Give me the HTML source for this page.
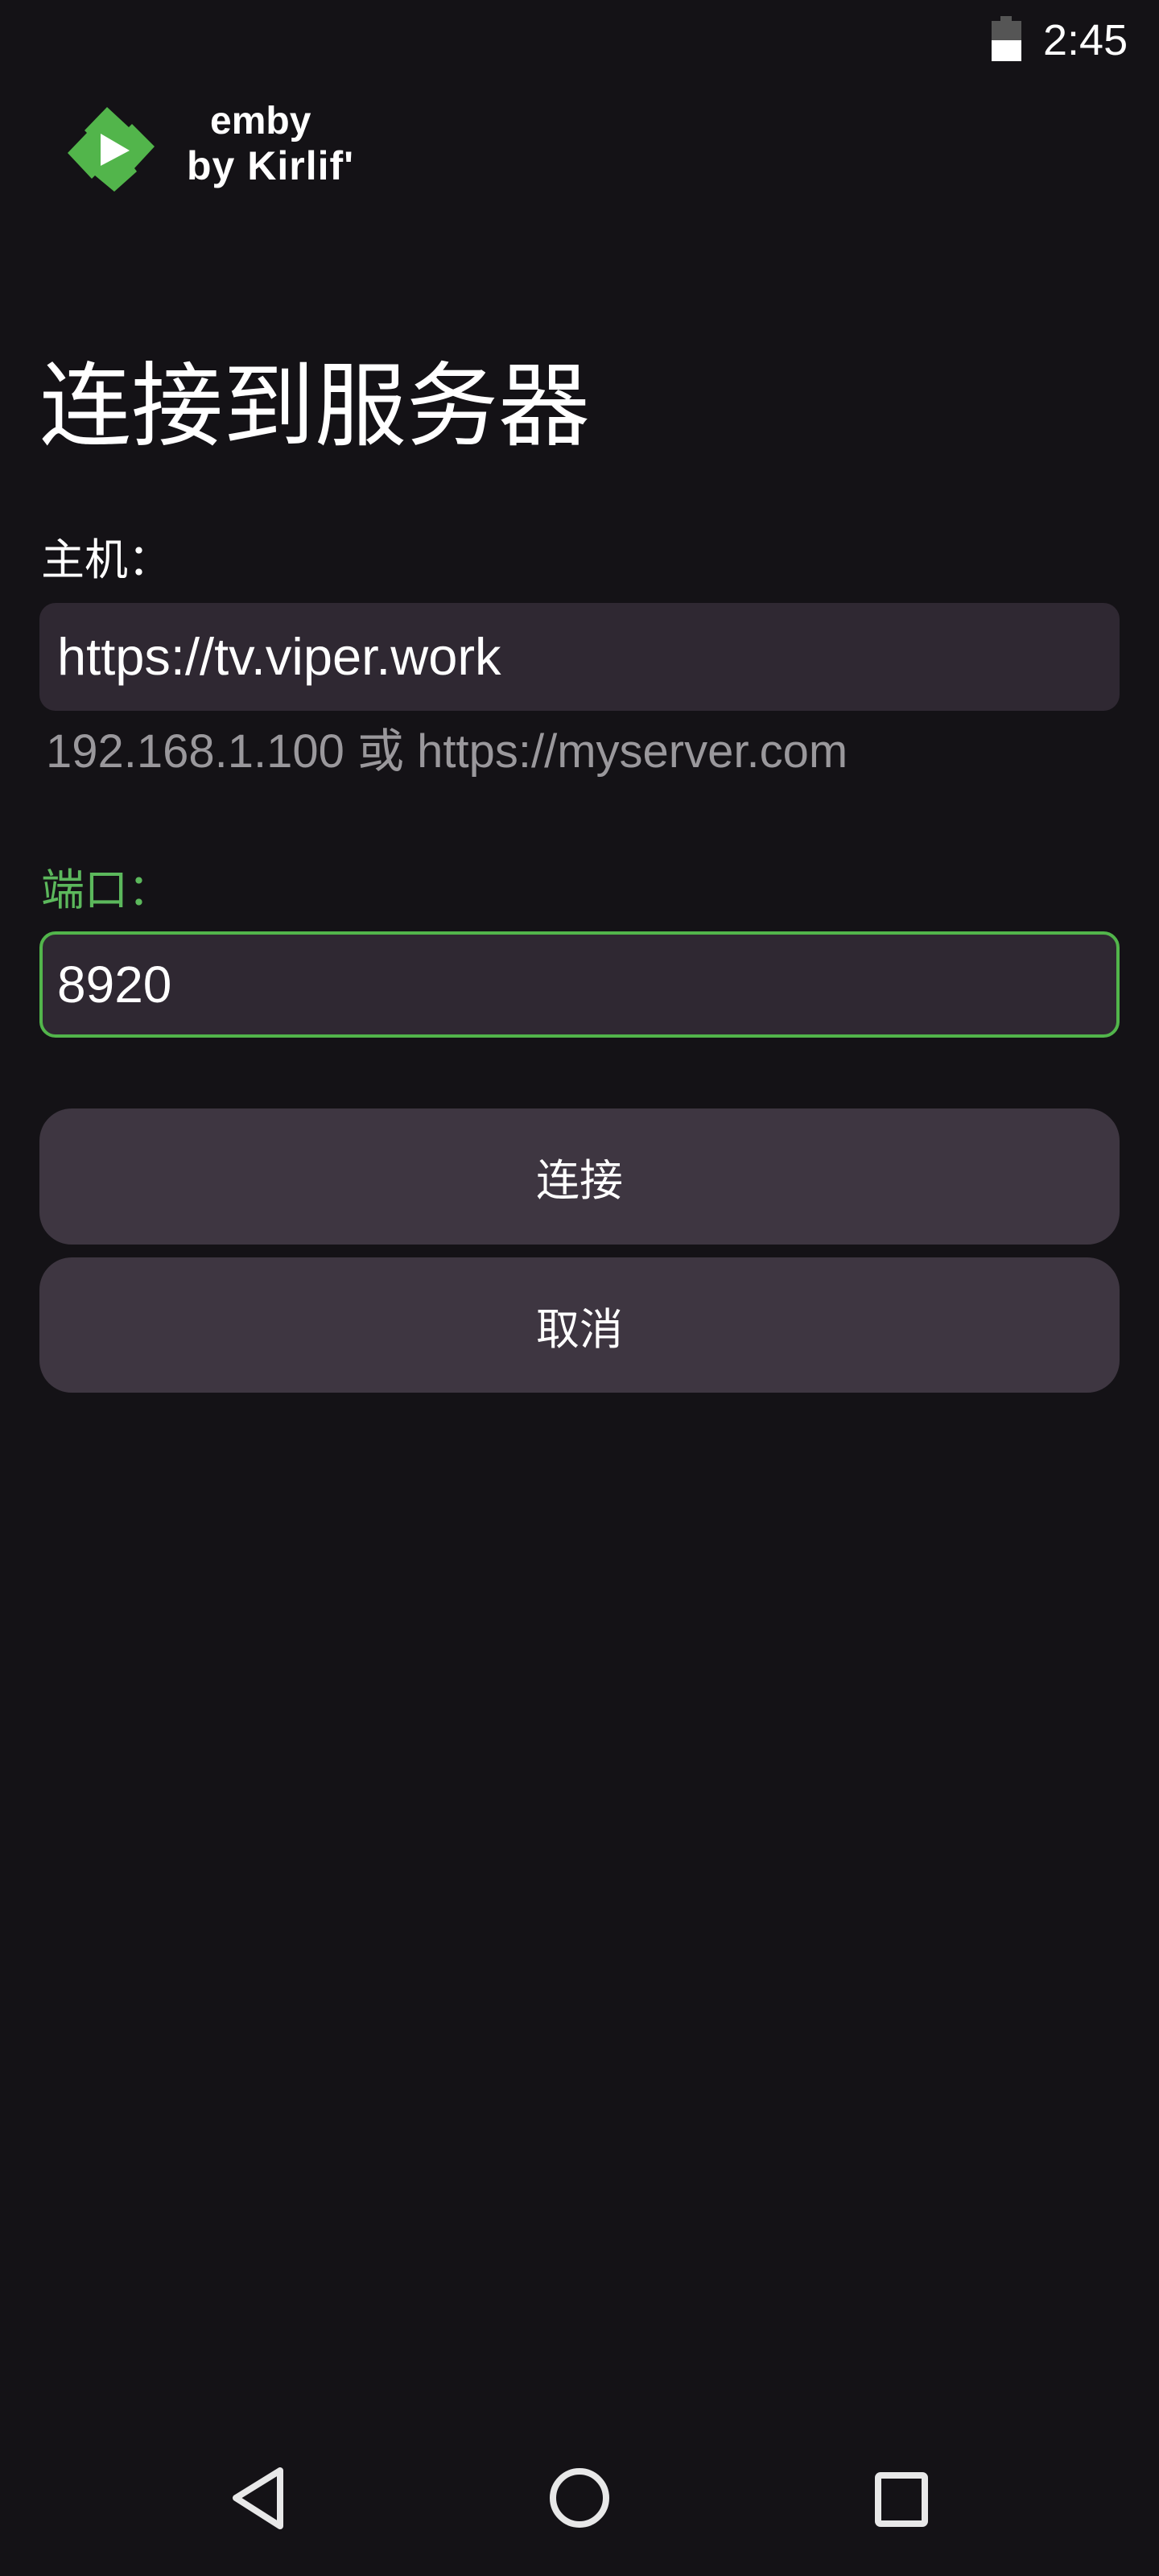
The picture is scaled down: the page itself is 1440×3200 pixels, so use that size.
<!DOCTYPE html>
<html><head><meta charset="utf-8"><style>
body{margin:0;width:1440px;height:3200px;background:#141216;position:relative;overflow:hidden;font-family:"Liberation Sans","Noto Sans CJK SC",sans-serif;color:#fff}
.a{position:absolute;white-space:nowrap}
.inp{position:absolute;left:49px;width:1342px;background:#2f2832;border-radius:20px;box-sizing:border-box}
.btn{position:absolute;left:49px;width:1342px;background:#3e3641;border-radius:40px;display:flex;align-items:center;justify-content:center;font-size:54px}
</style></head><body>
<div class="a" style="left:1243px;top:20px;width:14px;height:8px;background:#555"></div>
<div class="a" style="left:1232px;top:26px;width:37px;height:24px;background:#555"></div>
<div class="a" style="left:1232px;top:50px;width:37px;height:26px;background:#fff"></div>
<div class="a" style="left:1296px;top:18px;font-size:54px;line-height:64px">2:45</div>
<svg class="a" style="left:0;top:0" width="240" height="260"><polygon fill="#52b54b" points="133,133 160,158 164,154 192,182 167,209 170,213 142,238 118,218 114,222 84,190 108,165 105,162"/><polygon fill="#fff" points="125,166 161,187 125,206"/></svg>
<div class="a" style="left:261px;top:122px;font-size:48px;font-weight:bold;line-height:58px">emby</div>
<div class="a" style="left:232px;top:176px;font-size:50px;font-weight:bold;line-height:60px;letter-spacing:1px">by Kirlif'</div>
<div class="a" style="left:49px;top:436px;font-size:114px;line-height:140px">连接到服务器</div>
<div class="a" style="left:51px;top:660px;font-size:54px;line-height:72px">主机：</div>
<div class="inp" style="top:749px;height:134px"></div>
<div class="a" style="left:71px;top:780px;font-size:65px;line-height:72px">https://tv.viper.work</div>
<div class="a" style="left:57px;top:898px;font-size:58px;line-height:72px;color:#9a989c">192.168.1.100 或 https://myserver.com</div>
<div class="a" style="left:51px;top:1070px;font-size:54px;line-height:72px;color:#5cb85c">端口：</div>
<div class="inp" style="top:1157px;height:132px;border:4px solid #52b54b"></div>
<div class="a" style="left:71px;top:1187px;font-size:64px;line-height:72px">8920</div>
<div class="btn" style="top:1377px;height:169px">连接</div>
<div class="btn" style="top:1562px;height:168px">取消</div>
<svg class="a" style="left:0;top:3040px" width="1440" height="130">
<path d="M348 29 L348 98 L293 63 Z" fill="none" stroke="#e8e8e8" stroke-width="8" stroke-linejoin="round"/>
<circle cx="720" cy="63" r="33" fill="none" stroke="#e8e8e8" stroke-width="8"/>
<rect x="1091" y="35" width="58" height="60" rx="3" fill="none" stroke="#e8e8e8" stroke-width="8"/>
</svg>
</body></html>
